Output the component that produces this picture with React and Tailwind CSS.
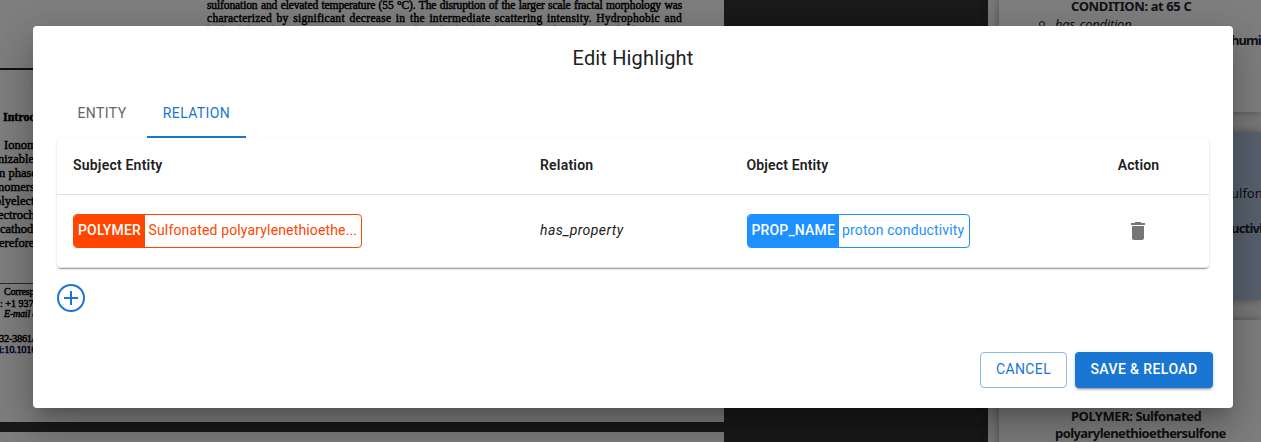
import React from "react";

const bodyLines = [
  ["Ionomers are ionizable", "pl-1"],
  ["nizable polymers", "-ml-[2px]"],
  ["n phase separated", "-ml-[1px]"],
  ["nomers have been", "-ml-[2px]"],
  ["olyelectrolytes in", "-ml-[5px]"],
  ["ectrochemical cells", "-ml-[2px]"],
  ["cathode reactions", "pl-0"],
  ["erefore, polymers", "-ml-[1px]"],
];

function PaperPage() {
  return (
    <div className="flex h-[422px] w-[724px] shrink-0 items-start overflow-hidden bg-white font-['Liberation_Serif',serif] text-black [-webkit-text-stroke:0.45px_black]">
      <div className="w-[207px] shrink-0 whitespace-nowrap pt-[68px]">
        <div className="h-0.5 w-[170px] bg-[#222]" />
        <div className="mt-[39px] pl-[3px] text-[12px] font-bold leading-[16px]">Introduction</div>
        <div className="mt-[13px] text-[12.5px] leading-[14px]">
          {bodyLines.map(([t, c]) => (
            <div key={t} className={c}>{t}</div>
          ))}
        </div>
        <div className="mt-[33px] h-px w-[100px] bg-[#555]" />
        <div className="pt-0.5 text-[10px] leading-[11.5px]">
          <div className="pl-1 tracking-[-0.02em]">Corresponding author.</div>
          <div>: +1 937 255 9184.</div>
          <div className="-mt-px pl-1 italic tracking-[-0.02em]">E-mail address:</div>
        </div>
        <div className="mt-[13px] text-[10.5px] leading-[11.5px] tracking-[-0.03em]">
          <div className="-ml-px">32-3861/$ see front matter</div>
          <div className="-ml-px text-[#000050] [-webkit-text-stroke:0.45px_#000050]">i:10.1016/j.polymer</div>
        </div>
      </div>
      <div className="-mt-[1px] w-[475px] text-justify text-[11.5px] leading-[13px] tracking-[-0.01em] [text-align-last:justify]">
        <div>sulfonation and elevated temperature (55 °C). The disruption of the larger scale fractal morphology was</div>
        <div className="tracking-[0.025em]">characterized by significant decrease in the intermediate scattering intensity. Hydrophobic and</div>
        <div>hydrophilic domain sizes were measured and displayed for the data set, and the proton</div>
      </div>
    </div>
  );
}

function Sidebar() {
  return (
    <div className="flex h-full flex-1 flex-col gap-5 overflow-hidden bg-[#f5f5f5] pl-[11px] font-['Noto_Sans',sans-serif] text-[13px] leading-[17.5px] text-[#212529]">
      <div className="h-[112px] shrink-0 whitespace-nowrap bg-white shadow-[0_0_8px_rgba(0,0,0,0.35)]">
        <div className="-mt-[2px] pl-[72px] font-bold tracking-[-0.03em]">CONDITION: at 65 C</div>
        <div className="flex items-center">
          <span className="ml-10 mr-2.5 size-1.5 rounded-full border border-[#212529]" />
          <span className="italic tracking-[-0.02em]">has_condition</span>
        </div>
        <div className="-mt-px pl-[232px] font-bold tracking-[-0.07em]">humidity</div>
      </div>
      <div className="h-[168px] shrink-0 whitespace-nowrap bg-[#b0c4de] pl-[232px] pt-[53px] shadow-[0_0_8px_rgba(0,0,0,0.35)]">
        <div>ulfonated</div>
        <div className="mt-[17px] font-bold tracking-[-0.06em]">uctivity</div>
      </div>
      <div className="h-[200px] shrink-0 bg-white pl-[56px] pt-[88px] font-bold shadow-[0_0_8px_rgba(0,0,0,0.35)]">
        <div className="pl-4 tracking-[-0.035em]">POLYMER: Sulfonated</div>
        <div className="-mt-px tracking-[-0.044em]">polyarylenethioethersulfone</div>
      </div>
    </div>
  );
}

function Chip({ label, text, box, fill }) {
  return (
    <div className={`inline-flex h-[34px] items-center overflow-hidden whitespace-nowrap rounded border text-sm tracking-[0.01071em] ${box}`}>
      <span className={`flex h-full shrink-0 items-center pl-1 font-medium text-white ${fill}`}>
        <span className="-mt-0.5">{label}</span>
      </span>
      <span className="-mt-0.5 px-[3.5px]">{text}</span>
    </div>
  );
}

const cols = "grid grid-cols-[467px_206.5px_337.5px_1fr] items-center border-b border-[#e0e0e0]";

function RelationTable() {
  return (
    <div className="rounded bg-white text-sm tracking-[0.01071em] shadow-[0_2px_1px_-1px_rgba(0,0,0,0.2),0_1px_1px_0_rgba(0,0,0,0.14),0_1px_3px_0_rgba(0,0,0,0.12)]">
      <div className={`${cols} h-[57px] pb-0.5 font-semibold`}>
        <div className="px-4 tracking-[0.015em]">Subject Entity</div>
        <div className="px-4 tracking-[0.015em]">Relation</div>
        <div className="px-4">Object Entity</div>
        <div className="text-center">Action</div>
      </div>
      <div className={`${cols} h-[73px] rounded-b`}>
        <div className="flex px-4">
          <Chip label="POLYMER" text="Sulfonated polyarylenethioethe..." box="w-[289px] border-[#ff4500] text-[#ff4500]" fill="w-[71px] bg-[#ff4500]" />
        </div>
        <div className="-mt-0.5 px-4 italic tracking-[0.03em]">has_property</div>
        <div className="flex px-4">
          <Chip label="PROP_NAME" text="proton conductivity" box="w-[223px] border-[#1e90ff] text-[#1e90ff]" fill="w-[91px] bg-[#1e90ff]" />
        </div>
        <div className="flex justify-center pr-[1px]">
          <svg viewBox="0 0 24 24" className="size-6 fill-[#757575]">
            <path d="M6 19c0 1.1.9 2 2 2h8c1.1 0 2-.9 2-2V7H6v12zM19 4h-3.5l-1-1h-5l-1 1H5v2h14V4z" />
          </svg>
        </div>
      </div>
    </div>
  );
}

function Dialog() {
  return (
    <div className="flex h-[382px] w-[1200px] flex-col rounded bg-white font-['Roboto',sans-serif] text-[#212121] shadow-[0_11px_15px_-7px_rgba(0,0,0,0.2),0_24px_38px_3px_rgba(0,0,0,0.14),0_9px_46px_8px_rgba(0,0,0,0.12)]">
      <h2 className="py-4 text-center text-xl font-normal leading-8 tracking-[0.0075em]">Edit Highlight</h2>
      <div className="flex-1 px-6">
        <div className="flex h-12 text-sm tracking-[0.02857em]">
          <button className="w-[90px] pb-0.5 text-[#666]">ENTITY</button>
          <button className="w-[99px] border-b-2 border-[#1976d2] text-[#1976d2]">RELATION</button>
        </div>
        <RelationTable />
        <svg viewBox="0 0 28 28" className="mt-4 size-7 fill-none stroke-[#1976d2] stroke-2">
          <circle cx="14" cy="14" r="13" />
          <path d="M14 7v14M7 14h14" />
        </svg>
      </div>
      <div className="flex justify-end gap-2 p-5 text-sm tracking-[0.02857em]">
        <button className="h-9 w-[87px] rounded border border-[#1976d2]/50 pb-0.5 text-[#1976d2]">CANCEL</button>
        <button className="h-9 w-[138px] rounded bg-[#1976d2] pb-0.5 font-medium text-white shadow-[0_3px_1px_-2px_rgba(0,0,0,0.2),0_2px_2px_0_rgba(0,0,0,0.14),0_1px_5px_0_rgba(0,0,0,0.12)]">SAVE &amp; RELOAD</button>
      </div>
    </div>
  );
}

export default function App() {
  return (
    <div className="relative h-[442px] w-[1261px] overflow-hidden">
      <div className="flex h-full">
        <div className="flex h-full w-[988px] flex-col gap-2.5 overflow-hidden border-r-[10px] border-[#303030] bg-[#343434]">
          <PaperPage />
          <div className="h-10 w-[724px] shrink-0 bg-white" />
        </div>
        <Sidebar />
      </div>
      <div className="absolute inset-0 flex items-start bg-black/50 pl-[33px] pt-[26px]">
        <Dialog />
      </div>
    </div>
  );
}
